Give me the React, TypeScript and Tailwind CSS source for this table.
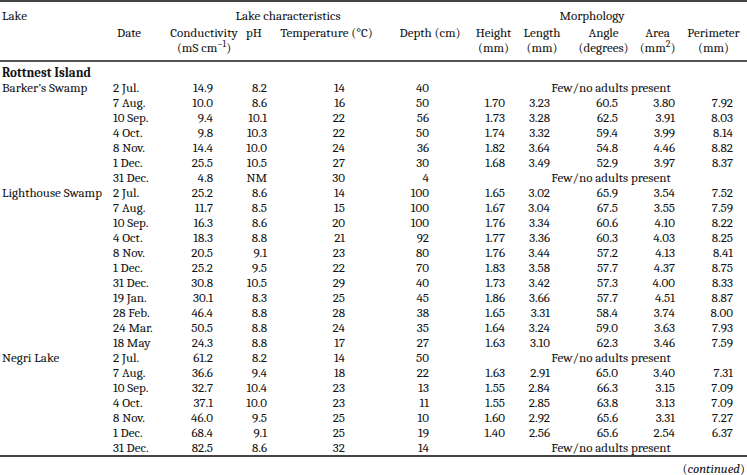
type Row = {
  lake?: string;
  date: string;
  cond: string;
  ph: string;
  temp: string;
  depth: string;
  morph?: [string, string, string, string, string];
};

const groups: { island?: string; rows: Row[] }[] = [
  {
    island: "Rottnest Island",
    rows: [
      { lake: "Barker’s Swamp", date: "2 Jul.", cond: "14.9", ph: "8.2", temp: "14", depth: "40" },
      { date: "7 Aug.", cond: "10.0", ph: "8.6", temp: "16", depth: "50", morph: ["1.70", "3.23", "60.5", "3.80", "7.92"] },
      { date: "10 Sep.", cond: "9.4", ph: "10.1", temp: "22", depth: "56", morph: ["1.73", "3.28", "62.5", "3.91", "8.03"] },
      { date: "4 Oct.", cond: "9.8", ph: "10.3", temp: "22", depth: "50", morph: ["1.74", "3.32", "59.4", "3.99", "8.14"] },
      { date: "8 Nov.", cond: "14.4", ph: "10.0", temp: "24", depth: "36", morph: ["1.82", "3.64", "54.8", "4.46", "8.82"] },
      { date: "1 Dec.", cond: "25.5", ph: "10.5", temp: "27", depth: "30", morph: ["1.68", "3.49", "52.9", "3.97", "8.37"] },
      { date: "31 Dec.", cond: "4.8", ph: "NM", temp: "30", depth: "4" },
      { lake: "Lighthouse Swamp", date: "2 Jul.", cond: "25.2", ph: "8.6", temp: "14", depth: "100", morph: ["1.65", "3.02", "65.9", "3.54", "7.52"] },
      { date: "7 Aug.", cond: "11.7", ph: "8.5", temp: "15", depth: "100", morph: ["1.67", "3.04", "67.5", "3.55", "7.59"] },
      { date: "10 Sep.", cond: "16.3", ph: "8.6", temp: "20", depth: "100", morph: ["1.76", "3.34", "60.6", "4.10", "8.22"] },
      { date: "4 Oct.", cond: "18.3", ph: "8.8", temp: "21", depth: "92", morph: ["1.77", "3.36", "60.3", "4.03", "8.25"] },
      { date: "8 Nov.", cond: "20.5", ph: "9.1", temp: "23", depth: "80", morph: ["1.76", "3.44", "57.2", "4.13", "8.41"] },
      { date: "1 Dec.", cond: "25.2", ph: "9.5", temp: "22", depth: "70", morph: ["1.83", "3.58", "57.7", "4.37", "8.75"] },
      { date: "31 Dec.", cond: "30.8", ph: "10.5", temp: "29", depth: "40", morph: ["1.73", "3.42", "57.3", "4.00", "8.33"] },
      { date: "19 Jan.", cond: "30.1", ph: "8.3", temp: "25", depth: "45", morph: ["1.86", "3.66", "57.7", "4.51", "8.87"] },
      { date: "28 Feb.", cond: "46.4", ph: "8.8", temp: "28", depth: "38", morph: ["1.65", "3.31", "58.4", "3.74", "8.00"] },
      { date: "24 Mar.", cond: "50.5", ph: "8.8", temp: "24", depth: "35", morph: ["1.64", "3.24", "59.0", "3.63", "7.93"] },
      { date: "18 May", cond: "24.3", ph: "8.8", temp: "17", depth: "27", morph: ["1.63", "3.10", "62.3", "3.46", "7.59"] },
      { lake: "Negri Lake", date: "2 Jul.", cond: "61.2", ph: "8.2", temp: "14", depth: "50" },
      { date: "7 Aug.", cond: "36.6", ph: "9.4", temp: "18", depth: "22", morph: ["1.63", "2.91", "65.0", "3.40", "7.31"] },
      { date: "10 Sep.", cond: "32.7", ph: "10.4", temp: "23", depth: "13", morph: ["1.55", "2.84", "66.3", "3.15", "7.09"] },
      { date: "4 Oct.", cond: "37.1", ph: "10.0", temp: "23", depth: "11", morph: ["1.55", "2.85", "63.8", "3.13", "7.09"] },
      { date: "8 Nov.", cond: "46.0", ph: "9.5", temp: "25", depth: "10", morph: ["1.60", "2.92", "65.6", "3.31", "7.27"] },
      { date: "1 Dec.", cond: "68.4", ph: "9.1", temp: "25", depth: "19", morph: ["1.40", "2.56", "65.6", "2.54", "6.37"] },
      { date: "31 Dec.", cond: "82.5", ph: "8.6", temp: "32", depth: "14" },
    ],
  },
];

// column widths: lake, date, cond, pH, temp, depth, height, length, angle, area, perimeter
const grid =
  "grid grid-cols-[110px_58px_72px_28px_117px_90px_37px_60px_63px_45px_67px]";

const morphPad = ["pr-[7px]", "pr-[22px]", "pr-[17px]", "pr-[5px]", "pr-[14px]"];

export default function App() {
  return (
    <div className="h-[475px] w-[747px] overflow-hidden bg-white font-serif [font-family:'Liberation_Serif','Times_New_Roman',serif] text-[13px] leading-[15px] text-[#111]">
      <div className="h-[2px] bg-[#444]" />

      {/* header */}
      <div className={`${grid} mt-[5px] h-[16px] items-center`}>
        <div className="pl-[2px]">Lake</div>
        <div className="col-span-5 pr-[9px] text-center">Lake characteristics</div>
        <div className="col-span-5 pr-[38px] text-center">Morphology</div>
      </div>
      <div className={`${grid} mt-[2px] items-start whitespace-nowrap text-center`}>
        <div />
        <div className="pl-[7px] text-left">Date</div>
        <div>
          Conductivity
          <br />
          (mS cm<sup>−1</sup>)
        </div>
        <div>pH</div>
        <div>Temperature (°C)</div>
        <div>Depth (cm)</div>
        <div>
          Height
          <br />
          (mm)
        </div>
        <div>
          Length
          <br />
          (mm)
        </div>
        <div>
          Angle
          <br />
          (degrees)
        </div>
        <div>
          Area
          <br />
          (mm<sup>2</sup>)
        </div>
        <div>
          Perimeter
          <br />
          (mm)
        </div>
      </div>
      <div className="mt-[5px] h-[2px] bg-[#555]" />

      {/* body */}
      <div className="pt-[3px]">
        {groups.map((g) => (
          <div key={g.island}>
            <div className="h-[15px] pl-[2px] font-bold">{g.island}</div>
            {g.rows.map((r, i) => (
              <div key={i} className={`${grid} h-[15px]`}>
                <div className="whitespace-nowrap pl-[2px]">{r.lake}</div>
                <div className="pl-[3px]">{r.date}</div>
                <div className="pr-[27px] text-right">{r.cond}</div>
                <div className="pr-[1px] text-right">{r.ph}</div>
                <div className="pr-[40px] text-right">{r.temp}</div>
                <div className="pr-[46px] text-right">{r.depth}</div>
                {r.morph ? (
                  r.morph.map((v, j) => (
                    <div key={j} className={`${morphPad[j]} text-right`}>
                      {v}
                    </div>
                  ))
                ) : (
                  <div className="col-span-5 text-center">Few/no adults present</div>
                )}
              </div>
            ))}
          </div>
        ))}
      </div>

      <div className="h-[2px] bg-[#444]" />
      <div className="mt-[4px] pr-[2px] text-right">
        (<span className="italic">continued</span>)
      </div>
    </div>
  );
}
